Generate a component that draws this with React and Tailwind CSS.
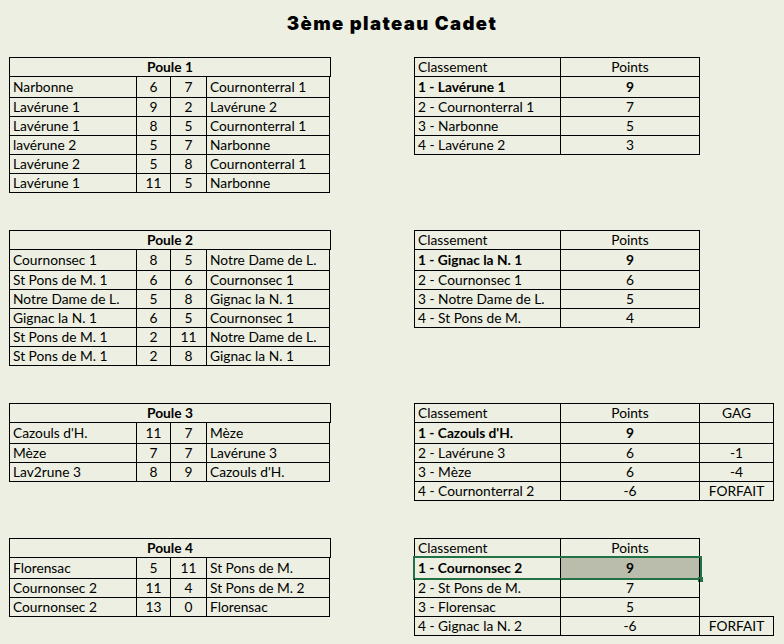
import React from "react";

function Cell({ w, h, l, t, center, bold, className = "", children }) {
  const cls = [
    "flex items-center border-r border-b border-black overflow-hidden whitespace-nowrap",
    w,
    h,
    l ? "border-l" : "",
    t ? "border-t" : "",
    center ? "justify-center" : "pl-[3px]",
    bold ? "font-bold" : "",
    className,
  ].join(" ");
  return <div className={cls}>{children}</div>;
}

function Poule({ title, rows }) {
  return (
    <div className="w-[322px]">
      <div className="flex h-[20px] items-center justify-center border border-black font-bold">
        {title}
      </div>
      {rows.map((r, i) => {
        const h = i === 0 ? "h-[21px]" : "h-[19px]";
        return (
          <div key={i} className="flex">
            <Cell w="w-[128px]" h={h} l>
              {r[0]}
            </Cell>
            <Cell w="w-[34px]" h={h} center>
              {r[1]}
            </Cell>
            <Cell w="w-[36px]" h={h} center>
              {r[2]}
            </Cell>
            <Cell w="w-[123px]" h={h}>
              {r[3]}
            </Cell>
          </div>
        );
      })}
    </div>
  );
}

function Classement({ rows, gag, selected }) {
  return (
    <div>
      <div className="flex">
        <Cell w="w-[147px]" h="h-[20px]" l t>
          Classement
        </Cell>
        <Cell w="w-[139px]" h="h-[20px]" t center>
          Points
        </Cell>
        {gag === "full" && (
          <Cell w="w-[74px]" h="h-[20px]" t center>
            GAG
          </Cell>
        )}
      </div>
      {rows.map((r, i) => {
        const h = i === 0 ? "h-[21px]" : "h-[19px]";
        const sel = selected && i === 0;
        return (
          <div key={i} className="relative flex">
            <Cell w="w-[147px]" h={h} l bold={i === 0}>
              {r[0]}
            </Cell>
            <Cell
              w="w-[139px]"
              h={h}
              center
              bold={i === 0}
              className={sel ? "bg-[#babdac]" : ""}
            >
              {r[1]}
            </Cell>
            {gag === "full" && (
              <Cell w="w-[74px]" h={h} center>
                {r[2]}
              </Cell>
            )}
            {gag === "last" && i === 2 && (
              <div className="h-[19px] w-[74px] border-b border-black" />
            )}
            {gag === "last" && i === 3 && (
              <Cell w="w-[74px]" h={h} center>
                {r[2]}
              </Cell>
            )}
            {sel && (
              <>
                <div className="pointer-events-none absolute -left-px -top-[2px] h-[24px] w-[289px] border-2 border-[#217346]" />
                <div className="absolute left-[284px] top-[19px] h-[5px] w-[5px] bg-[#217346]" />
              </>
            )}
          </div>
        );
      })}
    </div>
  );
}

const sections = [
  {
    title: "Poule 1",
    rows: [
      ["Narbonne", "6", "7", "Cournonterral 1"],
      ["Lavérune 1", "9", "2", "Lavérune 2"],
      ["Lavérune 1", "8", "5", "Cournonterral 1"],
      ["lavérune 2", "5", "7", "Narbonne"],
      ["Lavérune 2", "5", "8", "Cournonterral 1"],
      ["Lavérune 1", "11", "5", "Narbonne"],
    ],
    classement: [
      ["1 - Lavérune 1", "9"],
      ["2 - Cournonterral 1", "7"],
      ["3 - Narbonne", "5"],
      ["4 - Lavérune 2", "3"],
    ],
  },
  {
    title: "Poule 2",
    rows: [
      ["Cournonsec 1", "8", "5", "Notre Dame de L."],
      ["St Pons de M. 1", "6", "6", "Cournonsec 1"],
      ["Notre Dame de L.", "5", "8", "Gignac la N. 1"],
      ["Gignac la N. 1", "6", "5", "Cournonsec 1"],
      ["St Pons de M. 1", "2", "11", "Notre Dame de L."],
      ["St Pons de M. 1", "2", "8", "Gignac la N. 1"],
    ],
    classement: [
      ["1 - Gignac la N. 1", "9"],
      ["2 - Cournonsec 1", "6"],
      ["3 - Notre Dame de L.", "5"],
      ["4 - St Pons de M.", "4"],
    ],
  },
  {
    title: "Poule 3",
    rows: [
      ["Cazouls d'H.", "11", "7", "Mèze"],
      ["Mèze", "7", "7", "Lavérune 3"],
      ["Lav2rune 3", "8", "9", "Cazouls d'H."],
    ],
    classement: [
      ["1 - Cazouls d'H.", "9", ""],
      ["2 - Lavérune 3", "6", "-1"],
      ["3 - Mèze", "6", "-4"],
      ["4 - Cournonterral 2", "-6", "FORFAIT"],
    ],
    gag: "full",
  },
  {
    title: "Poule 4",
    rows: [
      ["Florensac", "5", "11", "St Pons de M."],
      ["Cournonsec 2", "11", "4", "St Pons de M. 2"],
      ["Cournonsec 2", "13", "0", "Florensac"],
    ],
    classement: [
      ["1 - Cournonsec 2", "9"],
      ["2 - St Pons de M.", "7"],
      ["3 - Florensac", "5"],
      ["4 - Gignac la N. 2", "-6", "FORFAIT"],
    ],
    gag: "last",
    selected: true,
  },
];

export default function App() {
  return (
    <div className="h-[644px] w-[784px] overflow-hidden bg-[#ecefe1] font-['Lato','Liberation_Sans',sans-serif] text-[13.75px] text-black">
      <div className="h-[57px] pt-[11px] text-center font-['Inter','Liberation_Sans',sans-serif] text-[18.5px] font-black leading-[24px] tracking-[1.4px]">
        3ème plateau Cadet
      </div>
      {sections.map((s, i) => (
        <div
          key={i}
          className={
            "flex items-start gap-[83px] pl-[9px] " + (i > 0 ? "mt-[37px]" : "")
          }
        >
          <Poule title={s.title} rows={s.rows} />
          <Classement rows={s.classement} gag={s.gag} selected={s.selected} />
        </div>
      ))}
    </div>
  );
}
